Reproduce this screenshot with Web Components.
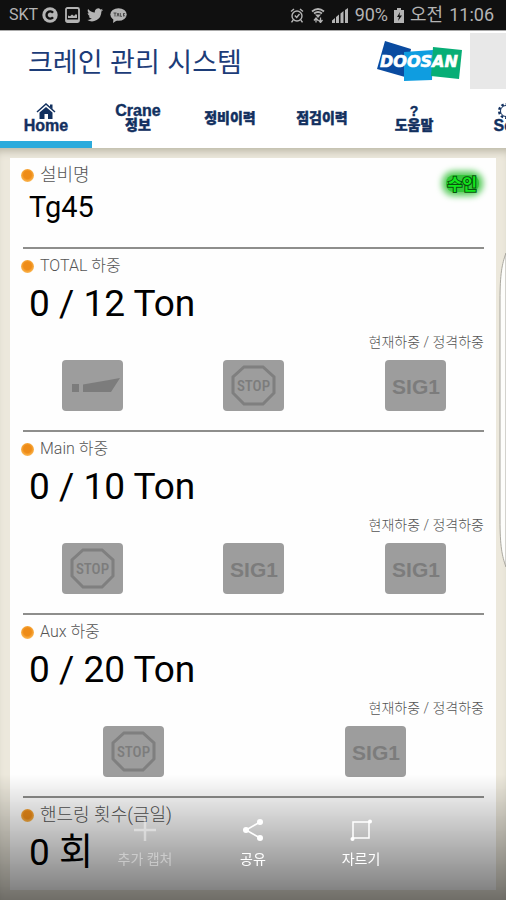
<!DOCTYPE html>
<html lang="ko">
<head>
<meta charset="utf-8">
<meta name="viewport" content="width=device-width, initial-scale=1">
<title>크레인 관리 시스템</title>
<style>
html,body{margin:0;background:#ece8dc}
body{font-family:Roboto,"Noto Sans CJK KR",sans-serif;color:#000;overflow-x:hidden}
</style>
</head>
<body>
<crane-app></crane-app>
<script>
const define = (name, html) => customElements.define(name, class extends HTMLElement {
  constructor() {
    super();
    this.attachShadow({mode: 'open'}).innerHTML = typeof html === 'function' ? html(this) : html;
  }
});

define('status-bar', `
<style>
:host{display:flex;align-items:center;height:30px;padding:0 12px 0 9px;background:#101010;color:#b4b4b4;font-size:18px;line-height:30px;justify-content:space-between}
div{display:flex;align-items:center;gap:6px}
.l{font-size:16px;gap:7px}
.l span{margin-right:-3px}
svg{display:block;flex:none}
</style>
<div class="l"><span>SKT</span>
<svg width="16" height="16" viewBox="0 0 16 16"><circle cx="8" cy="8" r="7.7" fill="#b4b4b4"/><path d="M11 5.8A3.6 3.6 0 1 0 11 10.200" fill="none" stroke="#101010" stroke-width="2.400"/></svg>
<svg width="15" height="16" viewBox="0 0 15 16"><rect x="1" y="1" width="13" height="14" rx="1.500" fill="none" stroke="#b4b4b4" stroke-width="1.800"/><path d="M3 11V8.500l2 .8 2-1.800 2 1.500 2-2 1 1V11z" fill="#b4b4b4"/><path d="M1 13.500h13" stroke="#b4b4b4" stroke-width="2"/></svg>
<svg width="16" height="14" viewBox="0 0 24 20"><path d="M24 2.400c-.9.400-1.800.7-2.800.8 1-.6 1.800-1.600 2.200-2.700-1 .6-2 1-3.100 1.200A4.900 4.900 0 0 0 11.900 6.200C7.800 6 4.200 4 1.700.9c-1.300 2.200-.7 5.100 1.500 6.600-.8 0-1.600-.2-2.200-.6 0 2.300 1.600 4.400 3.900 4.900-.7.200-1.500.2-2.200.1.600 2 2.400 3.400 4.600 3.400A9.900 9.900 0 0 1 0 17.300 14 14 0 0 0 21.500 4.900c1-.7 1.800-1.600 2.500-2.500z" fill="#b4b4b4"/></svg>
<svg width="17" height="15" viewBox="0 0 17 15"><ellipse cx="8.500" cy="6.500" rx="8.200" ry="6.300" fill="#b4b4b4"/><path d="M3.500 10.500 3 15l4.500-3z" fill="#b4b4b4"/><path d="M3.500 5h3M5 5v3.500M7 8.500l1-3.500 1 3.500M10.300 5v3.300H12M13.500 5v3.500M15 5l-1.400 1.700L15 8.500" stroke="#333" fill="none" stroke-width=".8"/></svg>
</div>
<div>
<svg width="14" height="15" viewBox="0 0 14 15" fill="none" stroke="#b4b4b4" stroke-width="1.400"><circle cx="7" cy="8" r="5"/><path d="M1 3.500 4 1M13 3.500 10 1M3.200 12 1.500 14.300M10.800 12l1.700 2.300M4.800 7.500 6.700 9.500 9.500 6"/></svg>
<svg width="16" height="15" viewBox="2 0 16 15"><path d="M4 3.500Q10 -1.500 16 3.500M6 5.500Q10 2.500 14 5.500" stroke="#b4b4b4" fill="none" stroke-width="1.800"/><path d="M7 6.500h6L10 10z" fill="#b4b4b4"/><path d="M8 10v4.500M6 12.500 8 10l2 2.500M12.500 9.500v4.500M10.500 12 12.500 14.500l2-2.500" stroke="#b4b4b4" fill="none" stroke-width="1.300"/></svg>
<svg width="17" height="15" viewBox="0 0 17 15" fill="#b4b4b4"><path d="M0 15v-2.500l3-2.500v5zM4 15V9l3-2.500V15zM8.500 15V5.500L11.500 3v12zM13 15V2l3-2v15z"/></svg>
<span>90%</span>
<svg width="10" height="15" viewBox="0 0 10 15"><path d="M3 0h4v2h3v13H0V2h3z" fill="#b4b4b4"/><path d="M6 4 3 9h2l-1 4 4-5.500H5.500z" fill="#101010"/></svg>
<span>오전</span><span>11:06</span>
</div>`);

define('doosan-logo', `
<style>:host{display:block;width:88px;height:42px}svg{display:block}text{font:italic 700 16px "DejaVu Sans",sans-serif}</style>
<svg width="88" height="42" viewBox="0 0 88 42" role="img" aria-label="DOOSAN">
<path d="M9 1 35 9 29 37 1 29z" fill="#0a4ba0"/><path d="M28 12 57 10 56 40 28 41z" fill="#0f9de0"/><path d="M57 7 86 10 83 39 55 36z" fill="#07ae76"/>
<text x="4" y="27" fill="#fff" stroke="#fff" stroke-width=".6">DOOSAN</text></svg>`);

define('app-header', `
<style>
:host{display:flex;align-items:center;height:60px;background:#fff;box-sizing:border-box;border-top:1px solid #aaa}
h1{flex:1;margin:0;padding-left:28px;font:400 27px/60px "Noto Sans CJK KR",sans-serif;color:#1c3c78;white-space:nowrap}
doosan-logo{margin-right:6px}
i{width:36px;height:56px;background:#e8e8e8}
</style>
<h1>크레인 관리 시스템</h1><doosan-logo></doosan-logo><i></i>`);

define('nav-tab', `
<style>
:host{display:block;flex:0 0 92px;box-sizing:border-box;border-bottom:7px solid transparent}
:host([active]){border-color:#2cabdc}
a{display:flex;flex-direction:column;align-items:center;justify-content:center;height:51px;padding-top:5px;box-sizing:border-box;color:#12305f;text-decoration:none;font:900 14px/14px "Liberation Sans","Noto Sans CJK KR",sans-serif;-webkit-text-stroke:.4px #12305f;text-align:center;white-space:nowrap}
::slotted(svg){display:block}
</style>
<a href="#"><slot></slot></a>`);

define('nav-tabs', `
<style>:host{display:flex;height:58px;background:#fff;overflow:hidden}
.w{font-size:16px}</style>
<nav-tab active><svg width="20" height="16" viewBox="0 0 20 16"><path d="M1 9 10 1l9 8" fill="none" stroke="#12305f" stroke-width="1.500"/><path d="M3.500 9.500 10 4l6.500 5.500V16h-4.500v-5H8.500v5h-5zM14 1.500h2.500V6L14 4z" fill="#12305f"/></svg><span class="w">Home</span></nav-tab>
<nav-tab><span class="w">Crane</span><span>정보</span></nav-tab>
<nav-tab><span>정비이력</span></nav-tab>
<nav-tab><span>점검이력</span></nav-tab>
<nav-tab><span>?</span><span>도움말</span></nav-tab>
<nav-tab><svg width="20" height="16" viewBox="0 0 20 16"><circle cx="10" cy="8" r="6.800" fill="none" stroke="#12305f" stroke-width="2.500" stroke-dasharray="2.500 2"/><circle cx="10" cy="8" r="5.500" fill="none" stroke="#12305f" stroke-width="1"/></svg><span class="w">Set</span></nav-tab>`);

define('load-section', `
<style>
:host{display:block;position:relative;padding-top:5px}
h2{display:flex;align-items:center;gap:6px;margin:0;padding-left:11px;height:24px;font-size:16px;font-weight:300;line-height:24px;color:#555}
:host([ko]) h2{font-size:18px}
h2::before{content:"";width:13px;height:13px;border-radius:50%;background:radial-gradient(circle at 50% 45%,#ee8c18 0 40%,#f7a638 58%,#ffd590)}
.v{padding-left:19px;font-size:37px;line-height:51px;white-space:nowrap}
:host([name]) .v{font-size:29px;line-height:41px;padding-bottom:19px}
hr{margin:0 12px 0 13px;border:0;height:2px;background:#8e8e8c}
:host([last]) hr{display:none}
</style>
<h2><slot name="label"></slot></h2>
<div class="v"><slot name="value"></slot></div>
<slot></slot><hr>`);

define('load-signals', `
<style>
p{margin:0;padding-right:12px;text-align:right;font-size:14px;font-weight:300;line-height:26px;color:#555}
div{display:flex;justify-content:space-around;padding:5px 0 19px 2px}
</style>
<p>현재하중 / 정격하중</p><div><slot></slot></div>`);

const signalArt = {
  stop: `<path d="M21 7h19l11 10v16L40 44H21L10 33V17z" fill="none" stroke="#7f7f7f" stroke-width="3"/><text x="30.500" y="31" font-size="15" font-weight="500" font-family="Roboto Condensed,Roboto,sans-serif">STOP</text>`,
  sig: `<text x="31" y="34" font-size="21" font-weight="700" font-family="Liberation Sans,sans-serif">SIG1</text>`,
  boom: `<path d="M10 24h7v8h-7zM21 24.500 47 20 58 18 49 32H21z" fill="#7c7c7c"/>`
};
define('signal-tile', el => `
<style>:host{display:block;width:61px;height:51px;border-radius:4px;background:#9d9d9d}svg{display:block}text{fill:#7c7c7c;text-anchor:middle}</style>
<svg width="61" height="51" viewBox="0 0 61 51">${signalArt[el.getAttribute('kind')]}</svg>`);

define('comm-badge', `
<style>:host{position:absolute;top:17px;right:17px;padding:0 2px;border-radius:8px;background:#35c63b;box-shadow:0 0 6px 4px #58cc5c;font:700 16px/17px "Noto Sans CJK KR",sans-serif}
span{display:block;paint-order:stroke fill;-webkit-text-stroke:2px #06520c;color:#12e61c}</style><span><slot></slot></span>`);

define('capture-bar', `
<style>
:host{position:fixed;left:0;right:0;bottom:0;height:125px;display:flex;justify-content:center;background:linear-gradient(rgba(0,0,0,0),rgba(0,0,0,.2) 38%,rgba(0,0,0,.44) 84%,rgba(0,0,0,.53))}
button{display:flex;flex-direction:column;align-items:center;width:108px;padding:43px 0 0;border:0;background:none;color:#fff;font:400 14px/20px Roboto,"Noto Sans CJK KR",sans-serif}
svg{display:block;margin-bottom:7px}
.dim{opacity:.4}
</style>
<button class="dim"><svg width="24" height="24" viewBox="0 0 24 24"><path d="M12 1v22M1 12h22" stroke="#fff" stroke-width="2.500"/></svg>추가 캡처</button>
<button><svg width="24" height="24" viewBox="0 0 24 24" fill="#fff"><path d="M19 4 5 12l14 8" fill="none" stroke="#fff" stroke-width="1.500"/><circle cx="19" cy="4" r="3"/><circle cx="5" cy="12" r="3"/><circle cx="19" cy="20" r="3"/></svg>공유</button>
<button><svg width="24" height="24" viewBox="0 0 24 24" fill="#fff"><path d="M4 4h16v16H4z" fill="none" stroke="#fff" stroke-width="1.500"/><circle cx="21" cy="3.500" r="2"/><circle cx="3.500" cy="21" r="2"/></svg>자르기</button>`);

define('edge-handle', `
<style>:host{position:fixed;top:250px;right:0}svg{display:block}</style>
<svg width="8" height="320" viewBox="0 0 8 320"><path d="M8 3C4 14 2 24 2 50V270C2 296 4 306 8 317z" fill="#fdfdfb" stroke="#a9a79f"/></svg>`);

define('crane-app', `
<style>
:host{display:block}
main{padding:10px 10px 10px;box-shadow:inset 0 8px 8px -5px #b9b5a4}
article{background:#fefefe;padding-bottom:12px}
</style>
<status-bar></status-bar><app-header></app-header><nav-tabs></nav-tabs>
<main><article>
<load-section ko name><span slot="label">설비명</span><span slot="value">Tg45</span><comm-badge>수인</comm-badge></load-section>
<load-section><span slot="label">TOTAL 하중</span><span slot="value">0 / 12 Ton</span><load-signals><signal-tile kind="boom"></signal-tile><signal-tile kind="stop"></signal-tile><signal-tile kind="sig"></signal-tile></load-signals></load-section>
<load-section><span slot="label">Main 하중</span><span slot="value">0 / 10 Ton</span><load-signals><signal-tile kind="stop"></signal-tile><signal-tile kind="sig"></signal-tile><signal-tile kind="sig"></signal-tile></load-signals></load-section>
<load-section><span slot="label">Aux 하중</span><span slot="value">0 / 20 Ton</span><load-signals><signal-tile kind="stop"></signal-tile><signal-tile kind="sig"></signal-tile></load-signals></load-section>
<load-section ko last><span slot="label">핸드링 횟수(금일)</span><span slot="value">0 회</span></load-section>
</article></main>
<edge-handle></edge-handle><capture-bar></capture-bar>`);
</script>
</body>
</html>
